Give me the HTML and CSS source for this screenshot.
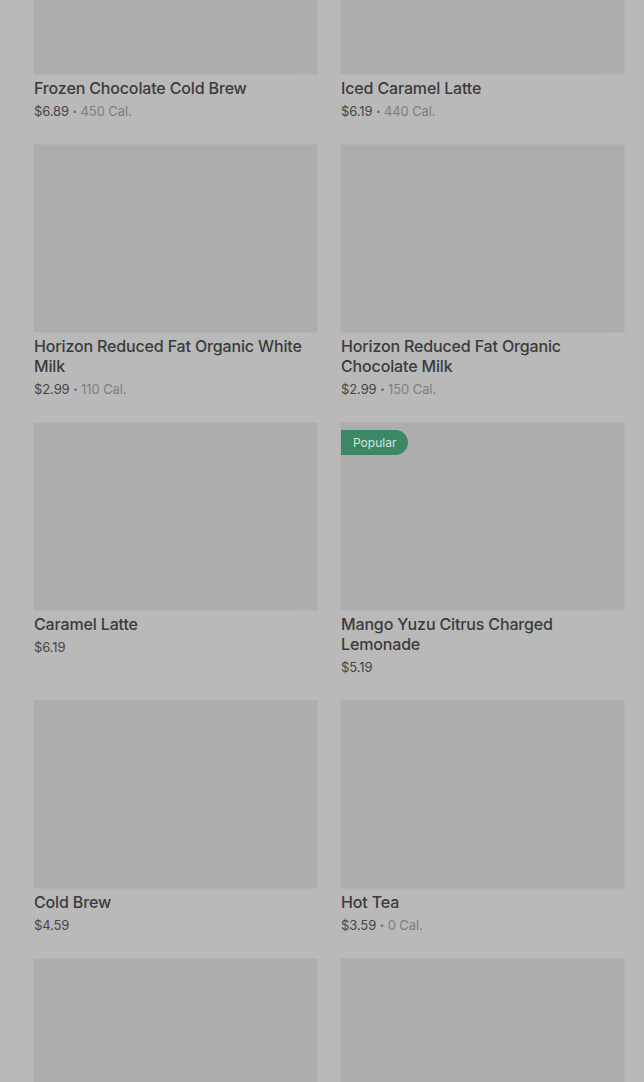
FILE: index.html
```html
<!DOCTYPE html>
<html lang="en">
<head>
    <meta charset="UTF-8">
    <meta name="viewport" content="width=device-width, initial-scale=1.0">
    <title>Menu</title>
    <link rel="stylesheet" href="styles.css">
</head>
<body>
    <div class="menu-grid">
        <div class="menu-item">
            <div class="item-photo"><span class="add-btn"></span></div>
            <div class="item-name">Frozen Chocolate Cold Brew</div>
            <div class="item-meta"><span class="price">$6.89</span> <span class="dot">•</span> <span class="cal">450 Cal.</span></div>
        </div>
        <div class="menu-item">
            <div class="item-photo"><span class="add-btn"></span></div>
            <div class="item-name">Iced Caramel Latte</div>
            <div class="item-meta"><span class="price">$6.19</span> <span class="dot">•</span> <span class="cal">440 Cal.</span></div>
        </div>

        <div class="menu-item">
            <div class="item-photo"><span class="add-btn"></span></div>
            <div class="item-name">Horizon Reduced Fat Organic White Milk</div>
            <div class="item-meta"><span class="price">$2.99</span> <span class="dot">•</span> <span class="cal">110 Cal.</span></div>
        </div>
        <div class="menu-item">
            <div class="item-photo"><span class="add-btn"></span></div>
            <div class="item-name">Horizon Reduced Fat Organic Chocolate Milk</div>
            <div class="item-meta"><span class="price">$2.99</span> <span class="dot">•</span> <span class="cal">150 Cal.</span></div>
        </div>

        <div class="menu-item">
            <div class="item-photo"><span class="add-btn"></span></div>
            <div class="item-name">Caramel Latte</div>
            <div class="item-meta"><span class="price">$6.19</span></div>
        </div>
        <div class="menu-item">
            <div class="item-photo">
                <span class="badge">Popular</span>
                <span class="add-btn"></span>
            </div>
            <div class="item-name">Mango Yuzu Citrus Charged Lemonade</div>
            <div class="item-meta"><span class="price">$5.19</span></div>
        </div>

        <div class="menu-item">
            <div class="item-photo"><span class="add-btn"></span></div>
            <div class="item-name">Cold Brew</div>
            <div class="item-meta"><span class="price">$4.59</span></div>
        </div>
        <div class="menu-item">
            <div class="item-photo"><span class="add-btn"></span></div>
            <div class="item-name">Hot Tea</div>
            <div class="item-meta"><span class="price">$3.59</span> <span class="dot">•</span> <span class="cal">0 Cal.</span></div>
        </div>

        <div class="menu-item">
            <div class="item-photo"><span class="add-btn"></span></div>
        </div>
        <div class="menu-item">
            <div class="item-photo"><span class="add-btn"></span></div>
        </div>
    </div>
</body>
</html>
```

FILE: styles.css
```css
html, body {
    height: 100%;
}

body {
    margin: 0;
    background: #b9b9b9;
    font-family: Inter, "Noto Sans", Arial, sans-serif;
    overflow: hidden;
}

/* page is scrolled: first row of photos is cut at the top */
.menu-grid {
    display: grid;
    grid-template-columns: 283px 283px;
    column-gap: 24px;
    row-gap: 24px;
    padding: 0 20px 0 34px;
    margin-top: -113px;
}

.item-photo {
    position: relative;
    height: 187px;
    background: #adadad;
    box-shadow: 0 0 0 1px #b3b3b3;
}

.add-btn {
    position: absolute;
    right: 0;
    bottom: 0;
    width: 22px;
    height: 30px;
    background: #aeaeae;
}

.badge {
    position: absolute;
    top: 7px;
    left: 0;
    height: 25px;
    line-height: 25px;
    padding: 0 12px;
    background: #3c8866;
    color: #d6e6dd;
    font-size: 12px;
    border-radius: 0 13px 13px 0;
}

.item-name {
    margin-top: 4px;
    font-size: 16px;
    line-height: 20px;
    font-weight: 500;
    letter-spacing: -0.15px;
    color: #3b3b3b;
}

.item-meta {
    margin-top: 3px;
    height: 20px;
    font-size: 13px;
    line-height: 20px;
    letter-spacing: -0.1px;
    color: #454545;
}

.dot {
    display: inline-block;
    line-height: 1;
    font-size: 8px;
    vertical-align: 2px;
    color: #6c6c6c;
}

.cal {
    color: #7e7e7e;
}
```
